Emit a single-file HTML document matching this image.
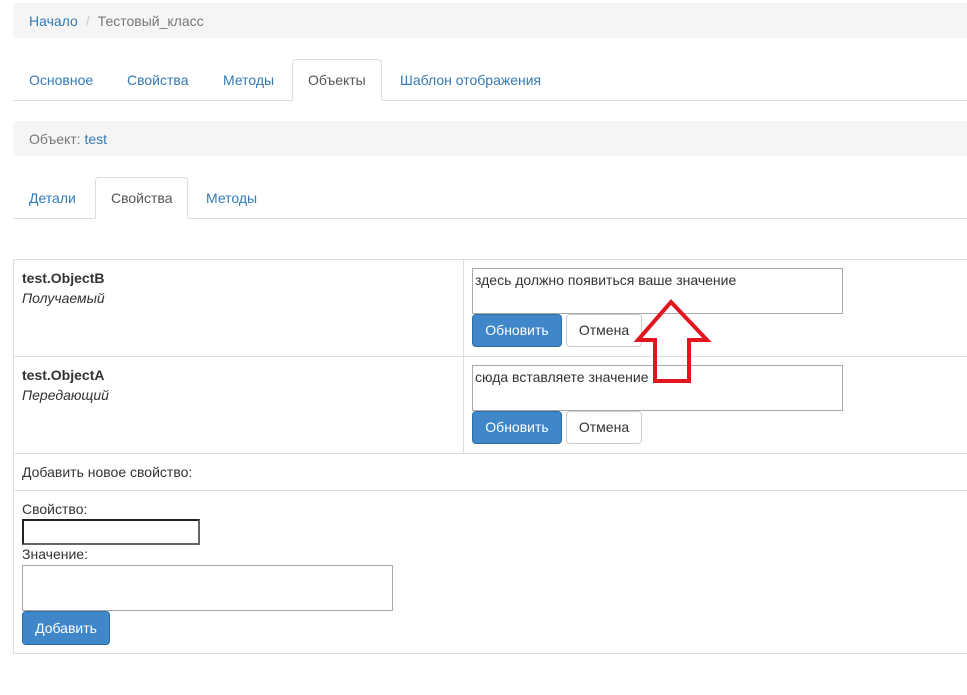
<!DOCTYPE html>
<html><head><meta charset="utf-8"><style>
*{box-sizing:border-box;margin:0;padding:0}
body{width:967px;height:695px;background:#fff;font-family:"Liberation Sans",Arial,sans-serif;font-size:14px;color:#333;position:relative;overflow:hidden}
.a{position:absolute}
.bar{background:#f5f5f5;border-radius:4px}
.link{color:#337ab7}
.tab{position:absolute;height:42px;border:1px solid #ddd;border-bottom-color:#fff;border-radius:4px 4px 0 0;background:#fff}
.ta{position:absolute;border:1px solid #a9a9a9;background:#fff;padding:3px 2px;font-size:14px}
.bp{position:absolute;background:#3f87c9;color:#fff;border:1px solid #2e6da4;border-radius:4px;text-align:center;line-height:31px}
.bd{position:absolute;background:#fff;color:#333;border:1px solid #ccc;border-radius:4px;text-align:center;line-height:31px}
.hl{position:absolute;height:1px;background:#ddd}
.vl{position:absolute;width:1px;background:#ddd}
</style></head><body>
<div class="a bar" style="left:13px;top:3px;width:960px;height:35px"></div>
<div class="a" style="left:29px;top:13px"><span class="link">Начало</span><span style="color:#ccc;padding:0 8px">/</span><span style="color:#777">Тестовый_класс</span></div>

<div class="hl" style="left:13px;top:100px;width:954px"></div>
<div class="tab" style="left:292px;top:59px;width:90px"></div>
<div class="a link" style="left:29px;top:72px">Основное</div>
<div class="a link" style="left:127px;top:72px">Свойства</div>
<div class="a link" style="left:223px;top:72px">Методы</div>
<div class="a" style="left:308px;top:72px;color:#555">Объекты</div>
<div class="a link" style="left:400px;top:72px">Шаблон отображения</div>

<div class="a bar" style="left:13px;top:121px;width:960px;height:35px"></div>
<div class="a" style="left:29px;top:131px;color:#777">Объект: <span class="link">test</span></div>

<div class="hl" style="left:13px;top:218px;width:954px"></div>
<div class="tab" style="left:95px;top:177px;width:93px"></div>
<div class="a link" style="left:29px;top:190px">Детали</div>
<div class="a" style="left:111px;top:190px;color:#555">Свойства</div>
<div class="a link" style="left:206px;top:190px">Методы</div>

<div class="hl" style="left:13px;top:259px;width:954px"></div>
<div class="hl" style="left:13px;top:356px;width:954px"></div>
<div class="hl" style="left:13px;top:453px;width:954px"></div>
<div class="hl" style="left:13px;top:490px;width:954px"></div>
<div class="hl" style="left:13px;top:653px;width:954px"></div>
<div class="vl" style="left:13px;top:259px;height:395px"></div>
<div class="vl" style="left:463px;top:259px;height:194px"></div>

<div class="a" style="left:22px;top:270px;font-weight:bold">test.ObjectB</div>
<div class="a" style="left:22px;top:290px;font-style:italic">Получаемый</div>
<div class="ta" style="left:472px;top:268px;width:371px;height:46px">здесь должно появиться ваше значение</div>
<div class="bp" style="left:472px;top:314px;width:90px;height:33px">Обновить</div>
<div class="bd" style="left:566px;top:314px;width:76px;height:33px">Отмена</div>

<div class="a" style="left:22px;top:367px;font-weight:bold">test.ObjectA</div>
<div class="a" style="left:22px;top:387px;font-style:italic">Передающий</div>
<div class="ta" style="left:472px;top:365px;width:371px;height:46px">сюда вставляете значение</div>
<div class="bp" style="left:472px;top:411px;width:90px;height:33px">Обновить</div>
<div class="bd" style="left:566px;top:411px;width:76px;height:33px">Отмена</div>

<div class="a" style="left:22px;top:464px">Добавить новое свойство:</div>
<div class="a" style="left:22px;top:501px">Свойство:</div>
<div class="a" style="left:22px;top:519px;width:178px;height:26px;border:2px solid #222;border-right-color:#666;border-bottom-color:#666"></div>
<div class="a" style="left:22px;top:546px">Значение:</div>
<div class="ta" style="left:22px;top:565px;width:371px;height:46px"></div>
<div class="bp" style="left:22px;top:611px;width:88px;height:34px;line-height:32px">Добавить</div>

<svg class="a" style="left:0;top:0" width="967" height="695"><polygon points="671,302 707,340 689,340 689,381 655,381 655,340 638,340" fill="none" stroke="#e3151f" stroke-width="4" stroke-linejoin="miter"/></svg>
</body></html>
